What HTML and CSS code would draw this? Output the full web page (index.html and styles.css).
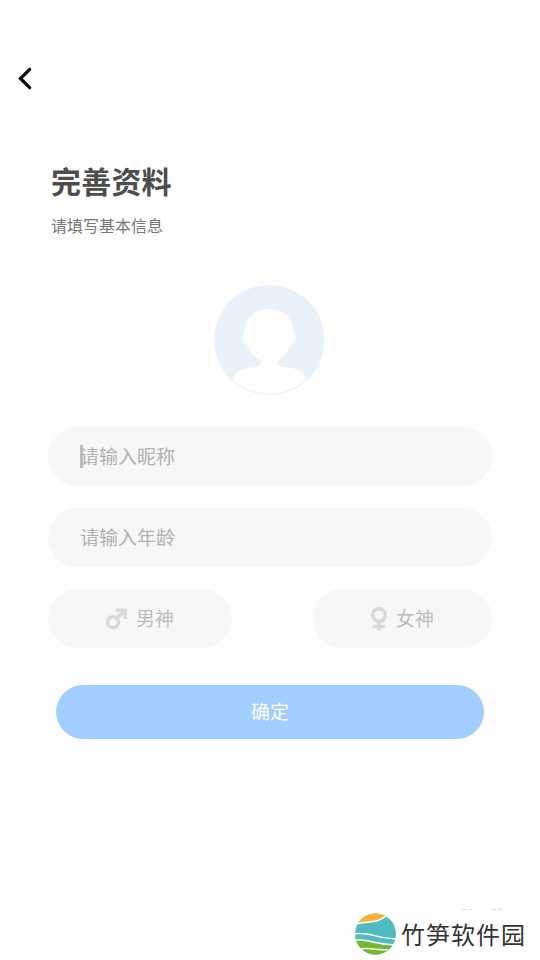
FILE: index.html
```html
<!DOCTYPE html>
<html lang="zh-CN">
<head>
<meta charset="utf-8">
<title>完善资料</title>
<link rel="stylesheet" href="styles.css">
</head>
<body>
<main class="screen">
  <header class="topbar">
    <svg class="back" width="16" height="24" viewBox="0 0 16 24"><path d="M12.7 3.3 3.4 12.5l9.3 9.2"/></svg>
  </header>
  <section class="heading">
    <h1 class="title">完善资料</h1>
    <p class="subtitle">请填写基本信息</p>
  </section>
  <svg class="avatar" width="112" height="112" viewBox="0 0 112 112">
    <defs><clipPath id="face"><circle cx="56.3" cy="56" r="54.2"/></clipPath></defs>
    <circle cx="56.3" cy="56" r="55" fill="#e9f2fa"/>
    <path clip-path="url(#face)" fill="#fefefe" d="M18 112L20 96C21 87 29 84 41 83C48 82 50 79 46 75C40 72 37 67 34 61C32 60 30 57 29.5 54C31 51 31 49 31.5 46C34 32 43 25 56 25C69 25 78 32 80.5 46C81 49 81 51 83 54C82 57 80 60 78 61C75 67 72 72 67 75C62 79 64 82 72 83C83 84 92 87 93 96L94 112Z"/>
    <path fill="none" stroke="#f3f3f4" d="M19 95.5A54.5 54.5 0 0 0 93.5 95.5"/>
  </svg>
  <form class="form">
    <div class="field"><span class="caret"></span>请输入昵称</div>
    <div class="field">请输入年龄</div>
    <div class="choices">
      <div class="choice male">
        <svg width="24" height="24" viewBox="0 0 24 24"><circle cx="9" cy="15.2" r="5.5"/><path d="m13 11.2 7-7M12 3.3h9.2v8.7"/></svg>
        <span>男神</span>
      </div>
      <div class="choice female">
        <svg width="20" height="26" viewBox="0 0 20 26"><circle cx="10" cy="9.2" r="6.3"/><path d="M10 15.500v9M3.800 20.500h12.400"/></svg>
        <span>女神</span>
      </div>
    </div>
    <div class="submit">确定</div>
  </form>
  <footer class="brand">
    <svg class="marks" width="66" height="2" viewBox="0 0 66 2"><path d="M1 1.500h4m3 0h3m20 0h4m2 0h4"/></svg>
    <svg class="logo" width="42" height="42" viewBox="0 0 42 42">
      <defs><clipPath id="disc"><circle cx="21.5" cy="21" r="20.5"/></clipPath></defs>
      <g clip-path="url(#disc)">
        <path fill="#50bcc0" d="M0 0h42v42H0z"/>
        <path fill="#f9b233" d="M3 11C14 7 20 12 31 3V0H0z"/>
        <path fill="#73b72b" d="M0 28C14 26 24 34 42 32v10H0z"/>
        <path class="wave" d="M0 11.500C14 7 22 12 33 2M0 21C15 18 26 27 43 25.500M0 27.500C14 25 25 33 43 31.500"/>
        <path class="wave" d="M4 37c9-4 16 1 30-.5"/>
      </g>
    </svg>
    <span class="name">竹笋软件园</span>
  </footer>
</main>
</body>
</html>
```
FILE: styles.css
```css
* { box-sizing: border-box; }
body {
  margin: 0;
  background: #fefefe;
  font-family: "Noto Sans CJK SC", sans-serif;
}
.screen {
  display: flex;
  flex-direction: column;
  width: 540px;
  height: 960px;
  overflow: hidden;
}
.topbar { height: 158px; padding: 66px 0 0 17px; }
.back {
  display: block;
  fill: none;
  stroke: #080808;
  stroke-width: 3.2;
  stroke-linecap: round;
}
.heading { height: 126px; padding-left: 51px; }
.title {
  margin: 0;
  font-size: 30px;
  line-height: 44px;
  font-weight: 700;
  letter-spacing: 0.2px;
  color: #4d4d4d;
}
.subtitle {
  margin: 11px 0 0;
  font-size: 16px;
  line-height: 24px;
  color: #777;
}
.avatar { display: block; margin: 0 0 0 213px; flex: none; }
.form { padding: 31px 48px 0; }
.field {
  display: flex;
  align-items: center;
  position: relative;
  height: 59px;
  margin-bottom: 22px;
  padding: 0 32px 2px;
  border-radius: 30px;
  background: #f7f7f7;
  color: #b0b0b0;
  font-size: 19px;
}
.caret {
  position: absolute;
  left: 32px;
  top: 18px;
  width: 3px;
  height: 23px;
  background: #bbb;
}
.choices { display: flex; justify-content: space-between; }
.choice {
  display: flex;
  align-items: center;
  height: 59px;
  border-radius: 30px;
  background: #f7f7f7;
  color: #bdbdbd;
  font-size: 19px;
}
.choice span { padding-bottom: 2px; }
.choice svg { fill: none; stroke: #d9d9d9; stroke-width: 3.6; }
.male { width: 184px; padding-left: 56px; gap: 8px; }
.female { width: 179px; padding-left: 56px; gap: 7px; }
.submit {
  height: 54px;
  margin: 37px 8px 0;
  border-radius: 27px;
  background: #a2cdff;
  color: #fff;
  font-size: 19px;
  line-height: 52px;
  text-align: center;
}
.brand {
  display: flex;
  align-items: center;
  position: relative;
  height: 52px;
  margin-top: auto;
  padding-left: 354px;
  gap: 5px;
}
.marks { position: absolute; left: 461px; top: 0; fill: none; stroke: #ddd; stroke-width: 1; }
.wave { fill: none; stroke: #fff; stroke-width: 1.5; }
.name {
  font-size: 24px;
  line-height: 36px;
  letter-spacing: 1px;
  white-space: nowrap;
  color: #333;
}
```
